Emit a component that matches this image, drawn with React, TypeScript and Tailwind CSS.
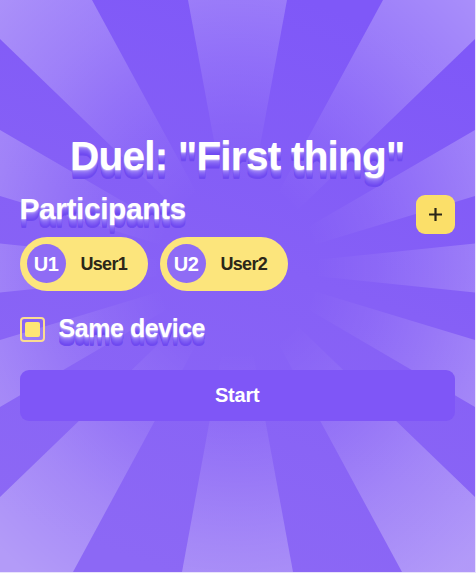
const SHADOW =
  "[text-shadow:0_1px_1px_#ffffff60,0_2px_1px_#a48af880,0_3px_1px_#8f71f7,0_4px_0_#8565f5,0_5px_0_#7f5ef4,0_6px_0_#7a57f3,0_7px_0_#7550f2,0_8px_0_#6f4af0,0_9px_0_#6f4af0]";

function Rays() {
  return (
    <svg className="absolute inset-0 h-[572px] w-[475px]" viewBox="0 0 475 572" preserveAspectRatio="none" aria-hidden="true">
      <defs>
        <linearGradient id="base" x1="0.65" y1="0" x2="0.35" y2="1">
          <stop offset="0" stopColor="#7f58f8" />
          <stop offset="0.45" stopColor="#8660f6" />
          <stop offset="1" stopColor="#8c68f5" />
        </linearGradient>
        <radialGradient id="ray" gradientUnits="userSpaceOnUse" cx="0" cy="0" r="1" gradientTransform="translate(237.5 268) scale(350 385)">
          <stop offset="0.22" stopColor="#fff" stopOpacity="0" />
          <stop offset="0.4" stopColor="#fff" stopOpacity="0.06" />
          <stop offset="0.55" stopColor="#fff" stopOpacity="0.13" />
          <stop offset="0.72" stopColor="#fff" stopOpacity="0.22" />
          <stop offset="1" stopColor="#fff" stopOpacity="0.34" />
        </radialGradient>
      </defs>
      <rect width="475" height="572" fill="url(#base)" />
      <g fill="url(#ray)">
        <path d="M237.5 268 188 0H287Z" />
        <path d="M237.5 268 383 0H475V39Z" />
        <path d="M237.5 268 475 130V196Z" />
        <path d="M237.5 268 475 243.5V292.5Z" />
        <path d="M237.5 268 475 340V407Z" />
        <path d="M237.5 268 475 497V572H402Z" />
        <path d="M237.5 268 293 572H182Z" />
        <path d="M237.5 268 73 572H0V497Z" />
        <path d="M237.5 268 0 407V340Z" />
        <path d="M237.5 268 0 292.5V243.5Z" />
        <path d="M237.5 268 0 196V130Z" />
        <path d="M237.5 268 0 39V0H92Z" />
      </g>
    </svg>
  );
}

function Participant({ initials, name }: { initials: string; name: string }) {
  return (
    <div className="flex h-[54px] w-32 items-center rounded-full bg-[#fce57c] pl-[7px] font-bold">
      <span className="flex size-[39px] items-center justify-center rounded-full bg-[#8f6cf5] text-xl tracking-[-0.5px] text-white">{initials}</span>
      <span className="ml-[15px] pt-px text-[18px] tracking-[-0.7px] text-[#2b2618]">{name}</span>
    </div>
  );
}

export default function App() {
  return (
    <div className="relative h-[573px] w-[476px] overflow-hidden bg-[#e9e3fc] font-['Liberation_Sans',Arial,sans-serif]">
      <Rays />
      <main className="relative flex w-[475px] flex-col pt-[133px] pr-5 pl-[19.5px]">
        <h1 className={`text-center text-[40.5px] leading-[46px] font-bold tracking-[-0.75px] whitespace-nowrap text-white ${SHADOW}`}>Duel: "First thing"</h1>
        <div className="mt-4 flex h-[41.5px] items-start justify-between">
          <h2 className={`text-[30px] leading-[28px] font-bold tracking-[-0.45px] text-white ${SHADOW}`}>Participants</h2>
          <button className="flex size-[39px] items-center justify-center rounded-[9px] bg-[#fbdf69]" aria-label="Add participant">
            <svg className="size-[13px]" viewBox="0 0 13 13" fill="none" stroke="#2b2618" strokeWidth="2.2">
              <path d="M6.5 0v13M0 6.5h13" />
            </svg>
          </button>
        </div>
        <div className="flex gap-3">
          <Participant initials="U1" name="User1" />
          <Participant initials="U2" name="User2" />
        </div>
        <label className="mt-[25.5px] flex h-[26px] items-center">
          <span className="flex size-[25px] items-center justify-center rounded-[4px] border-2 border-[#fbdc91]">
            <span className="size-[15px] rounded-[2px] bg-[#fee574]" />
          </span>
          <span className={`ml-[14px] pb-0.5 text-[25px] leading-[26px] font-bold tracking-[-0.45px] text-white ${SHADOW}`}>Same device</span>
        </label>
        <button className="mt-7 h-[51px] rounded-[9px] bg-[#7f56f7] pb-px text-xl font-bold tracking-[-0.2px] text-white">Start</button>
      </main>
    </div>
  );
}
